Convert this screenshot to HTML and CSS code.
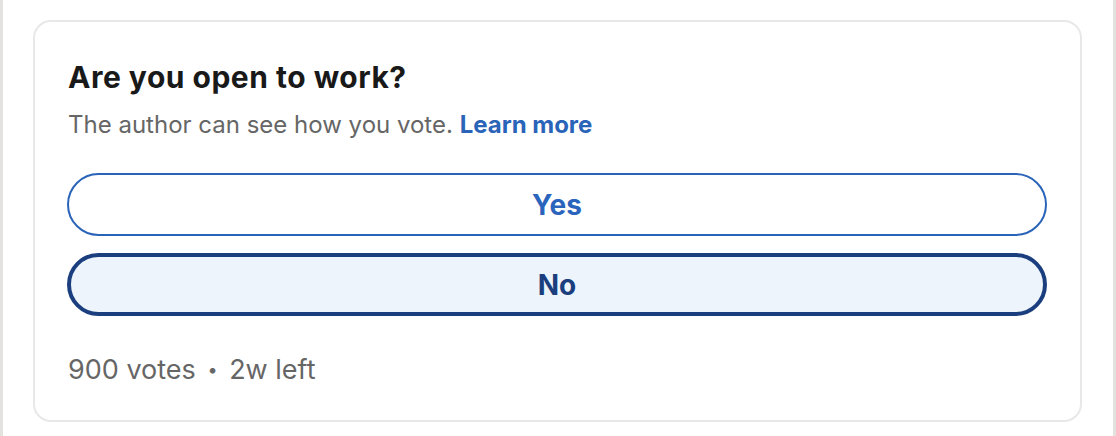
FILE: index.html
```html
<!DOCTYPE html>
<html lang="en">
<head>
<meta charset="utf-8">
<title>Poll</title>
<link rel="stylesheet" href="styles.css">
</head>
<body>
<div class="panel">
  <section class="card">
    <h2 class="title">Are you open to work?</h2>
    <p class="sub">The author can see how you vote. <a class="link" href="#">Learn more</a></p>
    <div class="options">
      <button class="opt opt-yes">Yes</button>
      <button class="opt opt-no">No</button>
    </div>
    <p class="meta">900 votes <span class="dot">•</span> 2w left</p>
  </section>
</div>
</body>
</html>
```

FILE: styles.css
```css
* { box-sizing: border-box; }
html, body { margin: 0; padding: 0; background: #ffffff; }
body { font-family: Inter, "Noto Sans", sans-serif; width: 1116px; height: 436px; overflow: hidden; }
.panel {
  height: 436px;
  border-left: 3px solid #e3e2df;
  border-right: 3px solid #e3e2df;
  padding: 20px 31px 0 30px;
}
.card {
  border: 2px solid #e8e8e8;
  border-radius: 18px;
  padding: 37px 32px 33px 32px;
  background: #fff;
}
.title {
  margin: 0;
  font-size: 30px;
  line-height: 36px;
  letter-spacing: 0.5px;
  font-weight: 700;
  color: #191919;
  padding-left: 1px;
}
.sub {
  margin: 14px 0 0 0;
  font-size: 24px;
  line-height: 32px;
  color: #666666;
  padding-left: 1px;
}
.link { color: #2a64b8; font-weight: 700; text-decoration: none; }
.options {
  margin-top: 32px;
  display: flex;
  flex-direction: column;
  gap: 17px;
  padding-right: 1px;
}
.opt {
  height: 63px;
  border-radius: 32px;
  font-family: inherit;
  font-size: 28px;
  font-weight: 700;
  display: flex;
  align-items: center;
  justify-content: center;
  width: 100%;
}
.opt-yes { background: #fff; border: 2px solid #2a64b8; color: #2a64bc; }
.opt-no { background: #edf4fc; border: 4px solid #1b3f7e; color: #1b3f7e; }
.meta {
  margin: 36px 0 0 0;
  font-size: 27px;
  line-height: 35px;
  color: #666666;
  padding-left: 1px;
}
.dot { font-size: 18px; vertical-align: 3px; margin: 0 4px; }
```
